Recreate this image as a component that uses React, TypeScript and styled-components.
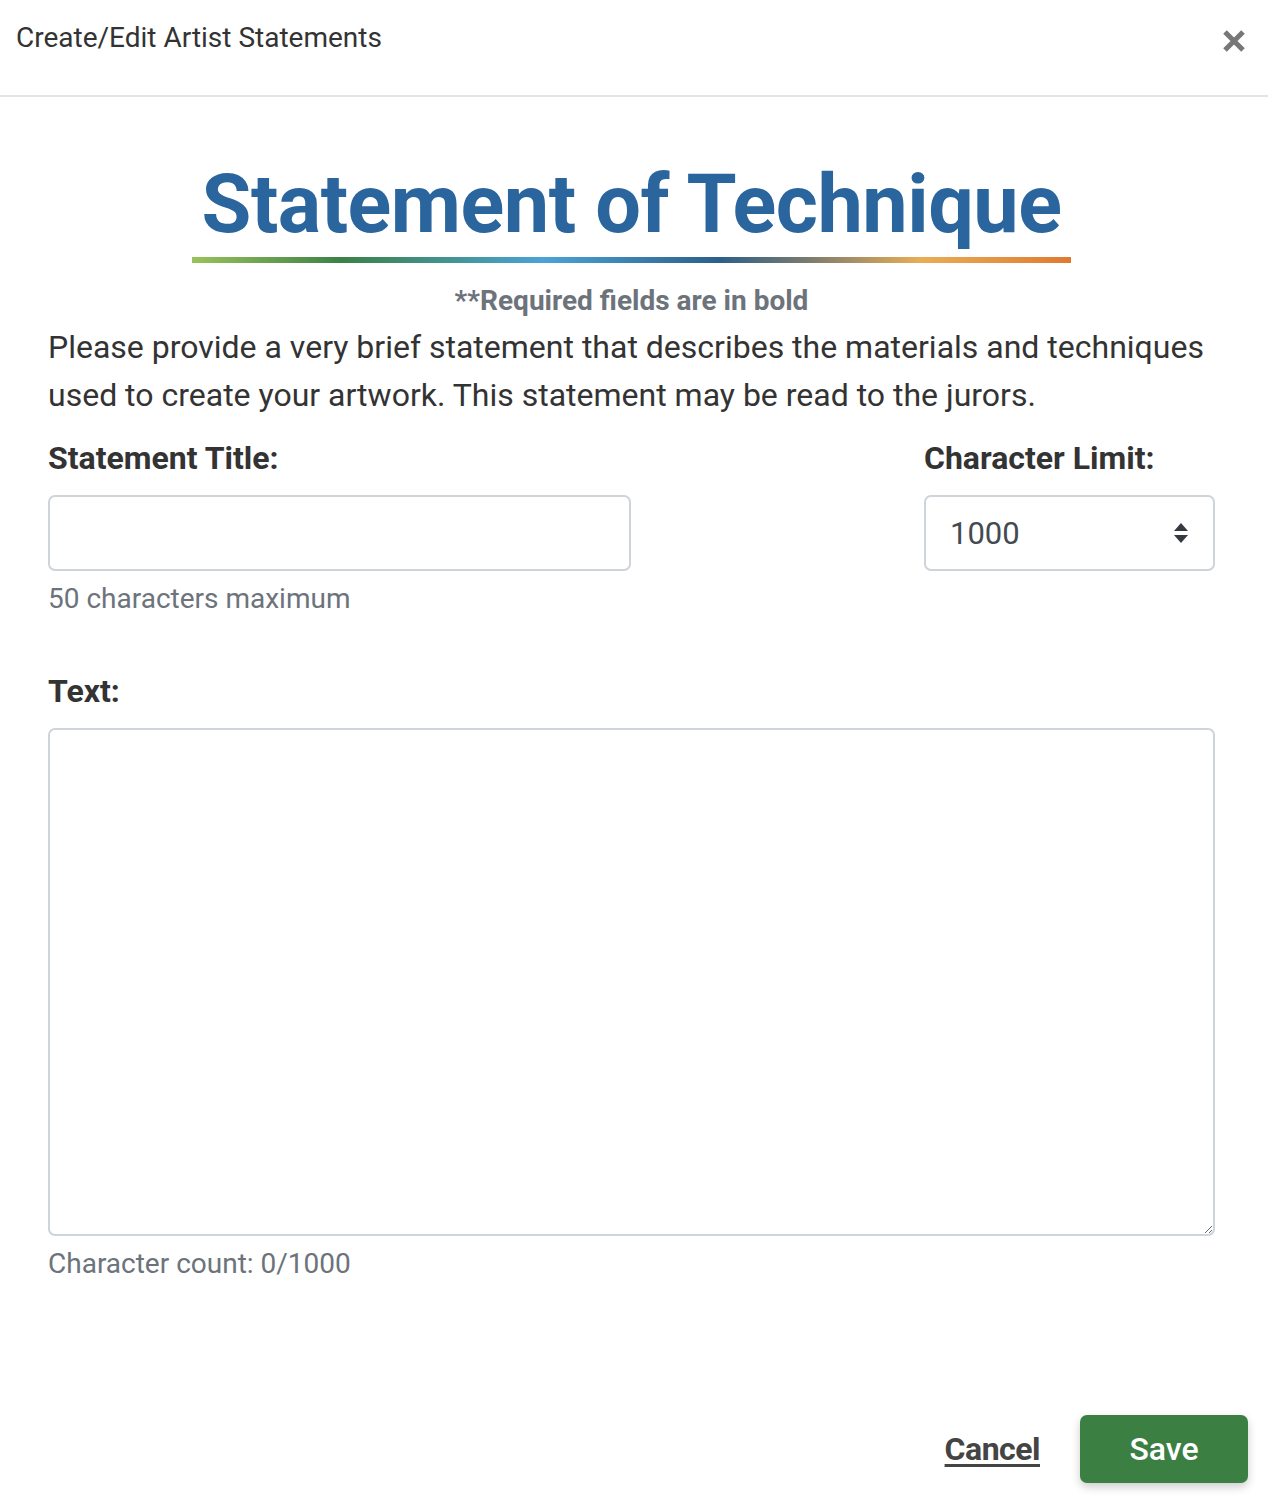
import React from 'react';
import styled, { createGlobalStyle } from 'styled-components';

const GlobalStyle = createGlobalStyle`
  html, body {
    margin: 0;
    padding: 0;
    background: #fff;
    font-family: Roboto, "Liberation Sans", sans-serif;
    color: #333;
  }
  * { box-sizing: border-box; }
`;

const Modal = styled.div`
  width: 1268px;
  min-height: 1498px;
  display: flex;
  flex-direction: column;
`;

const Header = styled.div`
  height: 97px;
  display: flex;
  align-items: flex-start;
  justify-content: space-between;
  padding: 20px 20px 0 16px;
  border-bottom: 2px solid #e2e5e8;
`;

const HeaderTitle = styled.h1`
  margin: 0;
  font-size: 28px;
  font-weight: 400;
  line-height: 36px;
  color: #333;
`;

const CloseButton = styled.button`
  border: none;
  background: none;
  padding: 0;
  margin-top: 7px;
  width: 28px;
  height: 28px;
  cursor: pointer;
  display: flex;
  align-items: center;
  justify-content: center;
`;

const Body = styled.div`
  padding: 0 53px 0 48px;
  display: flex;
  flex-direction: column;
`;

const TitleWrap = styled.div`
  display: flex;
  justify-content: center;
  margin-top: 60px;
`;

const TitleBox = styled.div`
  display: inline-flex;
  flex-direction: column;
  align-items: center;
`;

const MainTitle = styled.h2`
  margin: 0;
  padding: 0 10px;
  font-size: 81px;
  font-weight: 700;
  line-height: 96px;
  color: #2a659e;
  letter-spacing: -0.5px;
`;

const GradientBar = styled.div`
  align-self: stretch;
  height: 6px;
  margin-top: 4px;
  background: linear-gradient(
    90deg,
    #99c25a 0%,
    #3b8146 17%,
    #4aa3d6 40%,
    #2c5f87 60%,
    #7a7b6e 70%,
    #e9ad55 83%,
    #e07932 100%
  );
`;

const Required = styled.p`
  margin: 20px 0 0;
  text-align: center;
  font-size: 28px;
  font-weight: 700;
  line-height: 36px;
  color: #6c737b;
`;

const Intro = styled.p`
  margin: 4px 0 0;
  font-size: 32px;
  line-height: 48px;
  color: #333;
`;

const FieldRow = styled.div`
  display: flex;
  justify-content: space-between;
  margin-top: 19px;
`;

const Field = styled.div<{ $width: number }>`
  width: ${p => p.$width}px;
  display: flex;
  flex-direction: column;
`;

const Label = styled.label`
  font-size: 32px;
  font-weight: 700;
  line-height: 40px;
  color: #333;
  margin-bottom: 17px;
`;

const TextInput = styled.input`
  height: 76px;
  width: 100%;
  border: 2px solid #ced4da;
  border-radius: 7px;
  padding: 0 24px;
  font: inherit;
  font-size: 31px;
  color: #333;
  outline: none;
`;

const SelectBox = styled.div`
  position: relative;
  height: 76px;
  border: 2px solid #ced4da;
  border-radius: 7px;
  display: flex;
  align-items: center;
  justify-content: space-between;
  padding: 0 24px 0 24px;
  font-size: 31px;
  color: #444a52;
`;

const Help = styled.div`
  font-size: 28px;
  line-height: 40px;
  color: #6c737b;
  margin-top: 8px;
`;

const TextBlock = styled.div`
  display: flex;
  flex-direction: column;
  margin-top: 52px;
`;

const TextArea = styled.textarea`
  height: 508px;
  width: 100%;
  border: 2px solid #ced4da;
  border-radius: 7px;
  padding: 16px 24px;
  font: inherit;
  font-size: 31px;
  resize: vertical;
  outline: none;
`;

const Footer = styled.div`
  display: flex;
  justify-content: flex-end;
  align-items: center;
  gap: 40px;
  padding: 0 20px 0 0;
  margin-top: 131px;
`;

const CancelLink = styled.a`
  font-size: 32px;
  font-weight: 700;
  color: #444;
  text-decoration: underline;
  text-underline-offset: 4px;
  cursor: pointer;
  letter-spacing: -0.5px;
`;

const SaveButton = styled.button`
  width: 168px;
  height: 68px;
  border: none;
  border-radius: 7px;
  background: #3b7f43;
  color: #fff;
  font-family: inherit;
  font-size: 32px;
  font-weight: 500;
  cursor: pointer;
  box-shadow: 0 4px 10px rgba(0, 0, 0, 0.2);
`;

const App: React.FC = () => {
  return (
    <>
      <GlobalStyle />
      <Modal>
        <Header>
          <HeaderTitle>Create/Edit Artist Statements</HeaderTitle>
          <CloseButton aria-label="Close">
            <svg width="24" height="24" viewBox="0 0 24 24">
              <path d="M3 3 L21 21 M21 3 L3 21" stroke="#777" strokeWidth="5" strokeLinecap="butt" />
            </svg>
          </CloseButton>
        </Header>
        <Body>
          <TitleWrap>
            <TitleBox>
              <MainTitle>Statement of Technique</MainTitle>
              <GradientBar />
            </TitleBox>
          </TitleWrap>
          <Required>**Required fields are in bold</Required>
          <Intro>
            Please provide a very brief statement that describes the materials and techniques used to create your artwork. This statement may be read to the jurors.
          </Intro>
          <FieldRow>
            <Field $width={583}>
              <Label>Statement Title:</Label>
              <TextInput type="text" />
              <Help>50 characters maximum</Help>
            </Field>
            <Field $width={291}>
              <Label>Character Limit:</Label>
              <SelectBox>
                <span>1000</span>
                <svg width="16" height="22" viewBox="0 0 16 22">
                  <path d="M8 1 L15 9 H1 Z M8 21 L15 13 H1 Z" fill="#343a40" />
                </svg>
              </SelectBox>
            </Field>
          </FieldRow>
          <TextBlock>
            <Label>Text:</Label>
            <TextArea />
            <Help>Character count: 0/1000</Help>
          </TextBlock>
        </Body>
        <Footer>
          <CancelLink>Cancel</CancelLink>
          <SaveButton>Save</SaveButton>
        </Footer>
      </Modal>
    </>
  );
};

export default App;
